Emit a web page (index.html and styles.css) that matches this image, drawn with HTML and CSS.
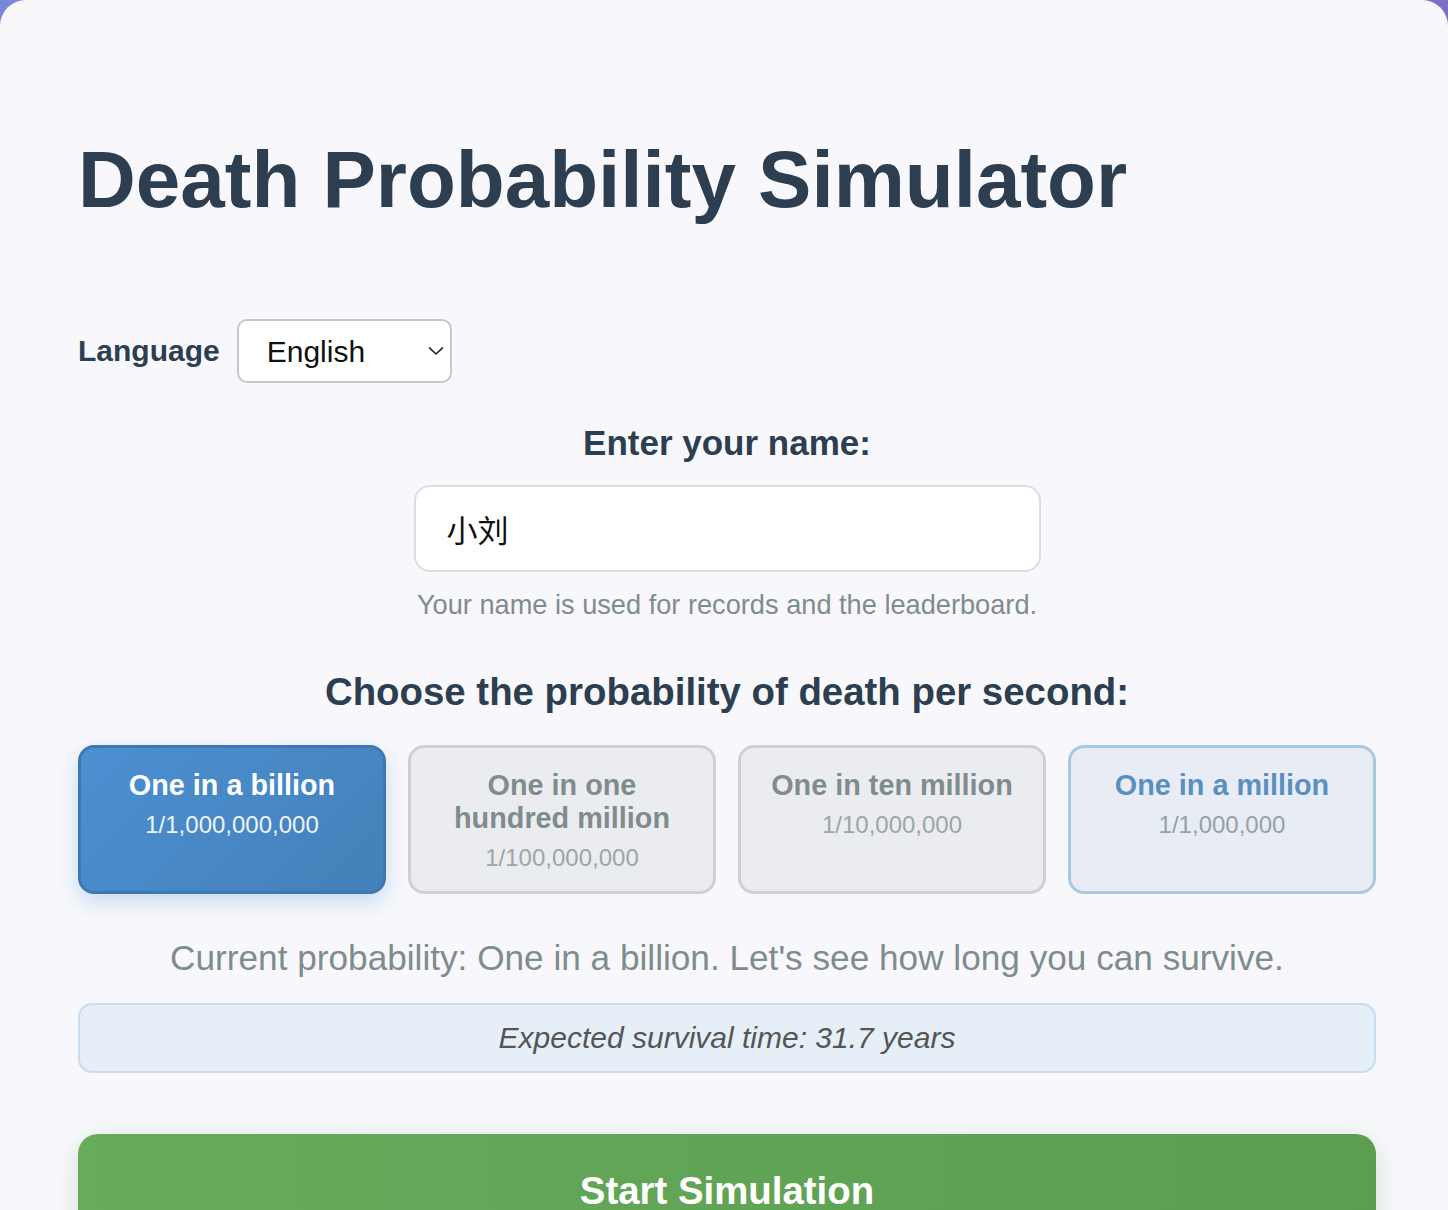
FILE: index.html
```html
<!DOCTYPE html>
<html lang="en">
<head>
<meta charset="utf-8">
<title>Death Probability Simulator</title>
<link rel="stylesheet" href="styles.css">
</head>
<body>
<div class="container">
  <h1 class="title">Death Probability Simulator</h1>

  <div class="lang-row">
    <label class="lang-label" for="lang">Language</label>
    <div class="select-wrap">
      <select id="lang" class="lang-select">
        <option>English</option>
        <option>中文</option>
      </select>
      <svg class="chev" width="16" height="10" viewBox="0 0 16 10"><path d="M1.5 1.8 L8 8 L14.5 1.8" fill="none" stroke="#222" stroke-width="1.6" stroke-linecap="round" stroke-linejoin="round"/></svg>
    </div>
  </div>

  <div class="name-block">
    <label class="name-label" for="name">Enter your name:</label>
    <input id="name" class="name-input" type="text" value="小刘">
    <p class="hint">Your name is used for records and the leaderboard.</p>
  </div>

  <h2 class="choose">Choose the probability of death per second:</h2>

  <div class="options">
    <div class="opt opt-selected">
      <div class="opt-title">One in a billion</div>
      <div class="opt-sub">1/1,000,000,000</div>
    </div>
    <div class="opt opt-muted">
      <div class="opt-title">One in one hundred million</div>
      <div class="opt-sub">1/100,000,000</div>
    </div>
    <div class="opt opt-muted">
      <div class="opt-title">One in ten million</div>
      <div class="opt-sub">1/10,000,000</div>
    </div>
    <div class="opt opt-light">
      <div class="opt-title">One in a million</div>
      <div class="opt-sub">1/1,000,000</div>
    </div>
  </div>

  <p class="current">Current probability: One in a billion. Let's see how long you can survive.</p>

  <div class="expected">Expected survival time: 31.7 years</div>

  <button class="start">Start Simulation</button>
</div>
</body>
</html>
```

FILE: styles.css
```css
* { box-sizing: border-box; }

html, body {
  margin: 0;
  padding: 0;
}

body {
  background: linear-gradient(90deg, #7b87d8 0%, #7a6fc4 100%);
  font-family: "Liberation Sans", Arial, Helvetica, sans-serif;
  color: #2c3e50;
  min-height: 1210px;
}

.container {
  background: #f8f8fc;
  border-radius: 26px;
  padding: 134px 72px 60px 78px;
  min-height: 1300px;
}

.title {
  margin: 0;
  font-size: 80px;
  line-height: 92px;
  font-weight: 700;
  color: #2c3e50;
}

.lang-row {
  display: flex;
  align-items: center;
  gap: 17px;
  margin-top: 93px;
}

.lang-label {
  font-size: 30px;
  font-weight: 700;
  color: #2c3e50;
}

.select-wrap {
  position: relative;
  width: 215px;
  height: 64px;
}

.lang-select {
  appearance: none;
  -webkit-appearance: none;
  width: 215px;
  height: 64px;
  border: 2px solid #c5c7cc;
  border-radius: 10px;
  background: #fff;
  font-family: "Liberation Sans", Arial, sans-serif;
  font-size: 30px;
  color: #111;
  padding: 0 0 0 28px;
}

.chev {
  position: absolute;
  right: 8px;
  top: 27px;
  pointer-events: none;
}

.name-block {
  display: flex;
  flex-direction: column;
  align-items: center;
  margin-top: 40px;
}

.name-label {
  font-size: 35px;
  line-height: 40px;
  font-weight: 700;
  color: #2c3e50;
}

.name-input {
  margin-top: 22px;
  width: 627px;
  height: 87px;
  border: 2px solid #dcdde0;
  border-radius: 16px;
  background: #fff;
  padding: 0 0 0 31px;
  font-family: "Liberation Sans", "Noto Sans CJK SC", sans-serif;
  font-size: 31px;
  color: #111;
  outline: none;
}

.hint {
  margin: 17px 0 0;
  font-size: 27.2px;
  line-height: 31px;
  color: #7f8c8d;
}

.choose {
  margin: 50px 0 0;
  text-align: center;
  font-size: 38.4px;
  line-height: 44px;
  font-weight: 700;
  color: #2c3e50;
}

.options {
  display: grid;
  grid-template-columns: repeat(4, 1fr);
  gap: 22px;
  margin-top: 31px;
}

.opt {
  border: 3.5px solid #d0d1d4;
  border-radius: 16px;
  padding: 21px 26px 18px;
  text-align: center;
  min-height: 149px;
}

.opt-title {
  font-size: 28.8px;
  line-height: 33px;
  font-weight: 700;
}

.opt-sub {
  margin-top: 8px;
  font-size: 24px;
  line-height: 29px;
}

.opt-selected {
  background: linear-gradient(135deg, #4b90d2 0%, #4480b8 100%);
  border-color: #3f78b0;
  box-shadow: 0 8px 22px rgba(74, 144, 217, 0.28);
}
.opt-selected .opt-title { color: #fff; }
.opt-selected .opt-sub { color: #eef4fb; }

.opt-muted {
  background: #ebecf0;
  border-color: #cfd0d3;
}
.opt-muted .opt-title { color: #7f8c8d; }
.opt-muted .opt-sub { color: #9ca6a7; }

.opt-light {
  background: #e8edf5;
  border-color: #a9c8e3;
}
.opt-light .opt-title { color: #5b8fc2; }
.opt-light .opt-sub { color: #95a1a3; }

.current {
  margin: 44px 0 0;
  text-align: center;
  font-size: 35.2px;
  line-height: 40px;
  color: #7f8c8d;
}

.expected {
  margin-top: 25px;
  height: 70px;
  border: 2px solid #c8dcf2;
  border-radius: 14px;
  background: #e6eef8;
  display: flex;
  align-items: center;
  justify-content: center;
  font-style: italic;
  font-size: 30px;
  color: #555;
}

.start {
  display: block;
  width: 100%;
  margin-top: 61px;
  border: none;
  border-radius: 20px;
  background: linear-gradient(90deg, #67ab5b 0%, #5d9d50 100%);
  color: #fff;
  font-family: "Liberation Sans", Arial, sans-serif;
  font-size: 38.4px;
  font-weight: 700;
  line-height: 44px;
  padding: 35px 0;
  box-shadow: 0 6px 26px rgba(80, 140, 70, 0.22);
}
```
